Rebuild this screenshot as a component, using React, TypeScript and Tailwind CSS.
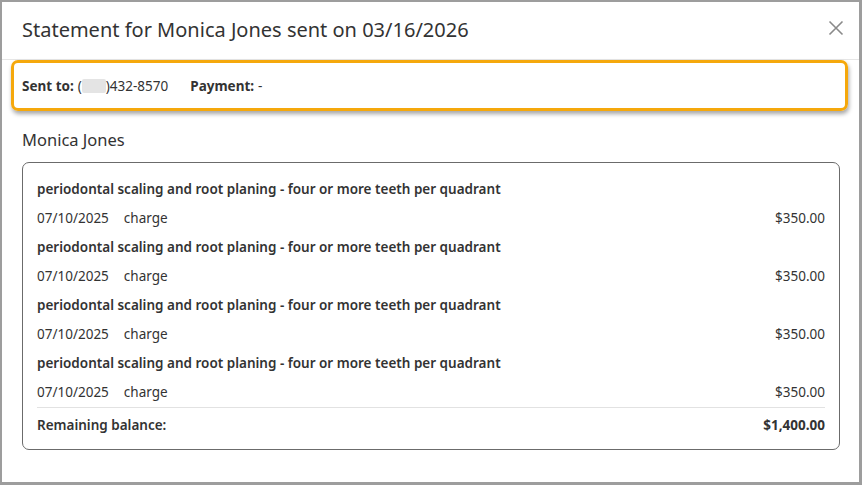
import React from "react";

const items = [1, 2, 3, 4];

export default function App() {
  return (
    <div
      className="w-[863px] h-[487px] bg-white"
      style={{ fontFamily: '"Noto Sans", "Open Sans", sans-serif' }}
    >
      <div className="w-[862px] h-[485px] border-l-2 border-t-2 border-r-[3px] border-b-[3px] border-[#9d9d9d] bg-white text-[#333333] flex flex-col">
        <div className="h-[58px] border-b border-[#e6e6e6] flex items-center justify-between pl-[20px] pr-[15px]">
          <h1 className="text-[20px] leading-none text-[#333333] pb-[2px]">
            Statement for Monica Jones sent on 03/16/2026
          </h1>
          <svg width="16" height="16" viewBox="0 0 16 16" className="mb-[5px]">
            <path d="M1.5 1.5 L14.5 14.5 M14.5 1.5 L1.5 14.5" stroke="#8a8a8a" strokeWidth="1.6" fill="none" />
          </svg>
        </div>
        <div className="ml-[9px] mr-[11px] h-[51px] border-[3px] border-[#f5a80c] rounded-[7px] shadow-[1px_3px_4px_rgba(0,0,0,0.35)] flex items-center pl-[8px] pt-[1px] text-[13.5px]">
          <span className="font-bold">Sent to:</span>
          <span className="ml-[4px]">(</span>
          <span className="inline-block w-[24px] h-[14px] bg-[#e4e4e4] rounded-[2px]"></span>
          <span>)432-8570</span>
          <span className="font-bold ml-[22px]">Payment:</span>
          <span className="ml-[4px]">-</span>
        </div>
        <div className="pl-[20px] pt-[18px] text-[16.5px] leading-[22px] text-[#333333]">Monica Jones</div>
        <div className="ml-[20px] mr-[19px] mt-[11px] border border-[#6b6b6b] rounded-[7px] px-[14px] pt-[12px] pb-[6px] text-[13.5px]">
          {items.map((i) => (
            <div key={i}>
              <div className="h-[28px] flex items-center font-semibold">
                periodontal scaling and root planing - four or more teeth per quadrant
              </div>
              <div className="h-[30px] flex items-center justify-between">
                <div className="flex gap-[15px]">
                  <span>07/10/2025</span>
                  <span>charge</span>
                </div>
                <span>$350.00</span>
              </div>
            </div>
          ))}
          <div className="border-t border-[#e2e2e2] h-[36px] flex items-center justify-between font-semibold">
            <span>Remaining balance:</span>
            <span className="font-bold">$1,400.00</span>
          </div>
        </div>
      </div>
    </div>
  );
}
